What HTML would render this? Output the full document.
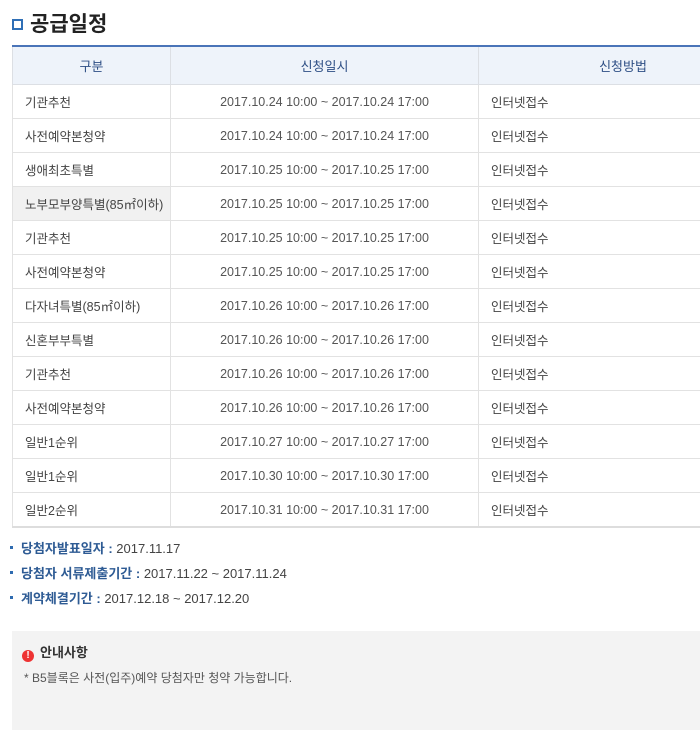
<!DOCTYPE html>
<html><head><meta charset="utf-8"><style>
body{margin:0;width:700px;height:730px;overflow:hidden;background:#fff;font-family:"Liberation Sans","Noto Sans CJK KR",sans-serif;color:#444;}
h2{position:absolute;left:12px;top:10px;margin:0;font-size:21px;font-weight:bold;color:#222;line-height:30px;}
.ic{position:absolute;left:12px;top:19px;width:7px;height:7px;border:2px solid #2f6fb6;background:#fff;}
h2 span{margin-left:18px;}
table{position:absolute;left:12px;top:45px;width:756px;border-collapse:collapse;border-top:2px solid #4a74b8;table-layout:fixed;font-size:12.5px;}
th{height:37px;padding:0;background:#eef3fa;color:#2e4f85;font-weight:normal;font-size:13px;border:1px solid #dcdfe4;border-top:0;}
td{height:33px;border:1px solid #e2e2e2;padding:0 0 0 12px;color:#444;}
td.c{text-align:center;padding:0;color:#555;}
tr:last-child td{border-bottom:2px solid #ddd;}
.g{background:#f1f1f1;}
ul{position:absolute;left:10px;top:539px;margin:0;padding:0;list-style:none;font-size:13px;font-weight:bold;}
li{height:25px;line-height:20px;color:#2e5b94;}
li:before{content:"";display:inline-block;width:3px;height:3px;background:#2e6bb0;vertical-align:middle;margin-right:8px;position:relative;top:-2px;}
li b{color:#444;font-weight:normal;}
.box{position:absolute;left:12px;top:631px;width:700px;height:99px;background:#f3f3f3;}
.box .t{position:absolute;left:10px;top:11px;font-size:13px;font-weight:bold;color:#333;}
.box .t i{display:inline-block;width:12px;height:12px;border-radius:50%;background:#e33;color:#fff;font-style:normal;font-size:10px;line-height:12px;text-align:center;margin-right:6px;vertical-align:-1px;}
.box .d{position:absolute;left:12px;top:38px;font-size:12px;color:#555;}
</style></head><body>
<div class="ic"></div><h2><span>공급일정</span></h2>
<table>
<colgroup><col style="width:158px"><col style="width:308px"><col></colgroup>
<tr><th>구분</th><th>신청일시</th><th>신청방법</th></tr>
<tr><td>기관추천</td><td class="c">2017.10.24 10:00 ~ 2017.10.24 17:00</td><td>인터넷접수</td></tr>
<tr><td>사전예약본청약</td><td class="c">2017.10.24 10:00 ~ 2017.10.24 17:00</td><td>인터넷접수</td></tr>
<tr><td>생애최초특별</td><td class="c">2017.10.25 10:00 ~ 2017.10.25 17:00</td><td>인터넷접수</td></tr>
<tr><td class="g">노부모부양특별(85㎡이하)</td><td class="c">2017.10.25 10:00 ~ 2017.10.25 17:00</td><td>인터넷접수</td></tr>
<tr><td>기관추천</td><td class="c">2017.10.25 10:00 ~ 2017.10.25 17:00</td><td>인터넷접수</td></tr>
<tr><td>사전예약본청약</td><td class="c">2017.10.25 10:00 ~ 2017.10.25 17:00</td><td>인터넷접수</td></tr>
<tr><td>다자녀특별(85㎡이하)</td><td class="c">2017.10.26 10:00 ~ 2017.10.26 17:00</td><td>인터넷접수</td></tr>
<tr><td>신혼부부특별</td><td class="c">2017.10.26 10:00 ~ 2017.10.26 17:00</td><td>인터넷접수</td></tr>
<tr><td>기관추천</td><td class="c">2017.10.26 10:00 ~ 2017.10.26 17:00</td><td>인터넷접수</td></tr>
<tr><td>사전예약본청약</td><td class="c">2017.10.26 10:00 ~ 2017.10.26 17:00</td><td>인터넷접수</td></tr>
<tr><td>일반1순위</td><td class="c">2017.10.27 10:00 ~ 2017.10.27 17:00</td><td>인터넷접수</td></tr>
<tr><td>일반1순위</td><td class="c">2017.10.30 10:00 ~ 2017.10.30 17:00</td><td>인터넷접수</td></tr>
<tr><td>일반2순위</td><td class="c">2017.10.31 10:00 ~ 2017.10.31 17:00</td><td>인터넷접수</td></tr>
</table>
<ul>
<li>당첨자발표일자 : <b>2017.11.17</b></li>
<li>당첨자 서류제출기간 : <b>2017.11.22 ~ 2017.11.24</b></li>
<li>계약체결기간 : <b>2017.12.18 ~ 2017.12.20</b></li>
</ul>
<div class="box"><div class="t"><i>!</i>안내사항</div><div class="d">* B5블록은 사전(입주)예약 당첨자만 청약 가능합니다.</div></div>
</body></html>
